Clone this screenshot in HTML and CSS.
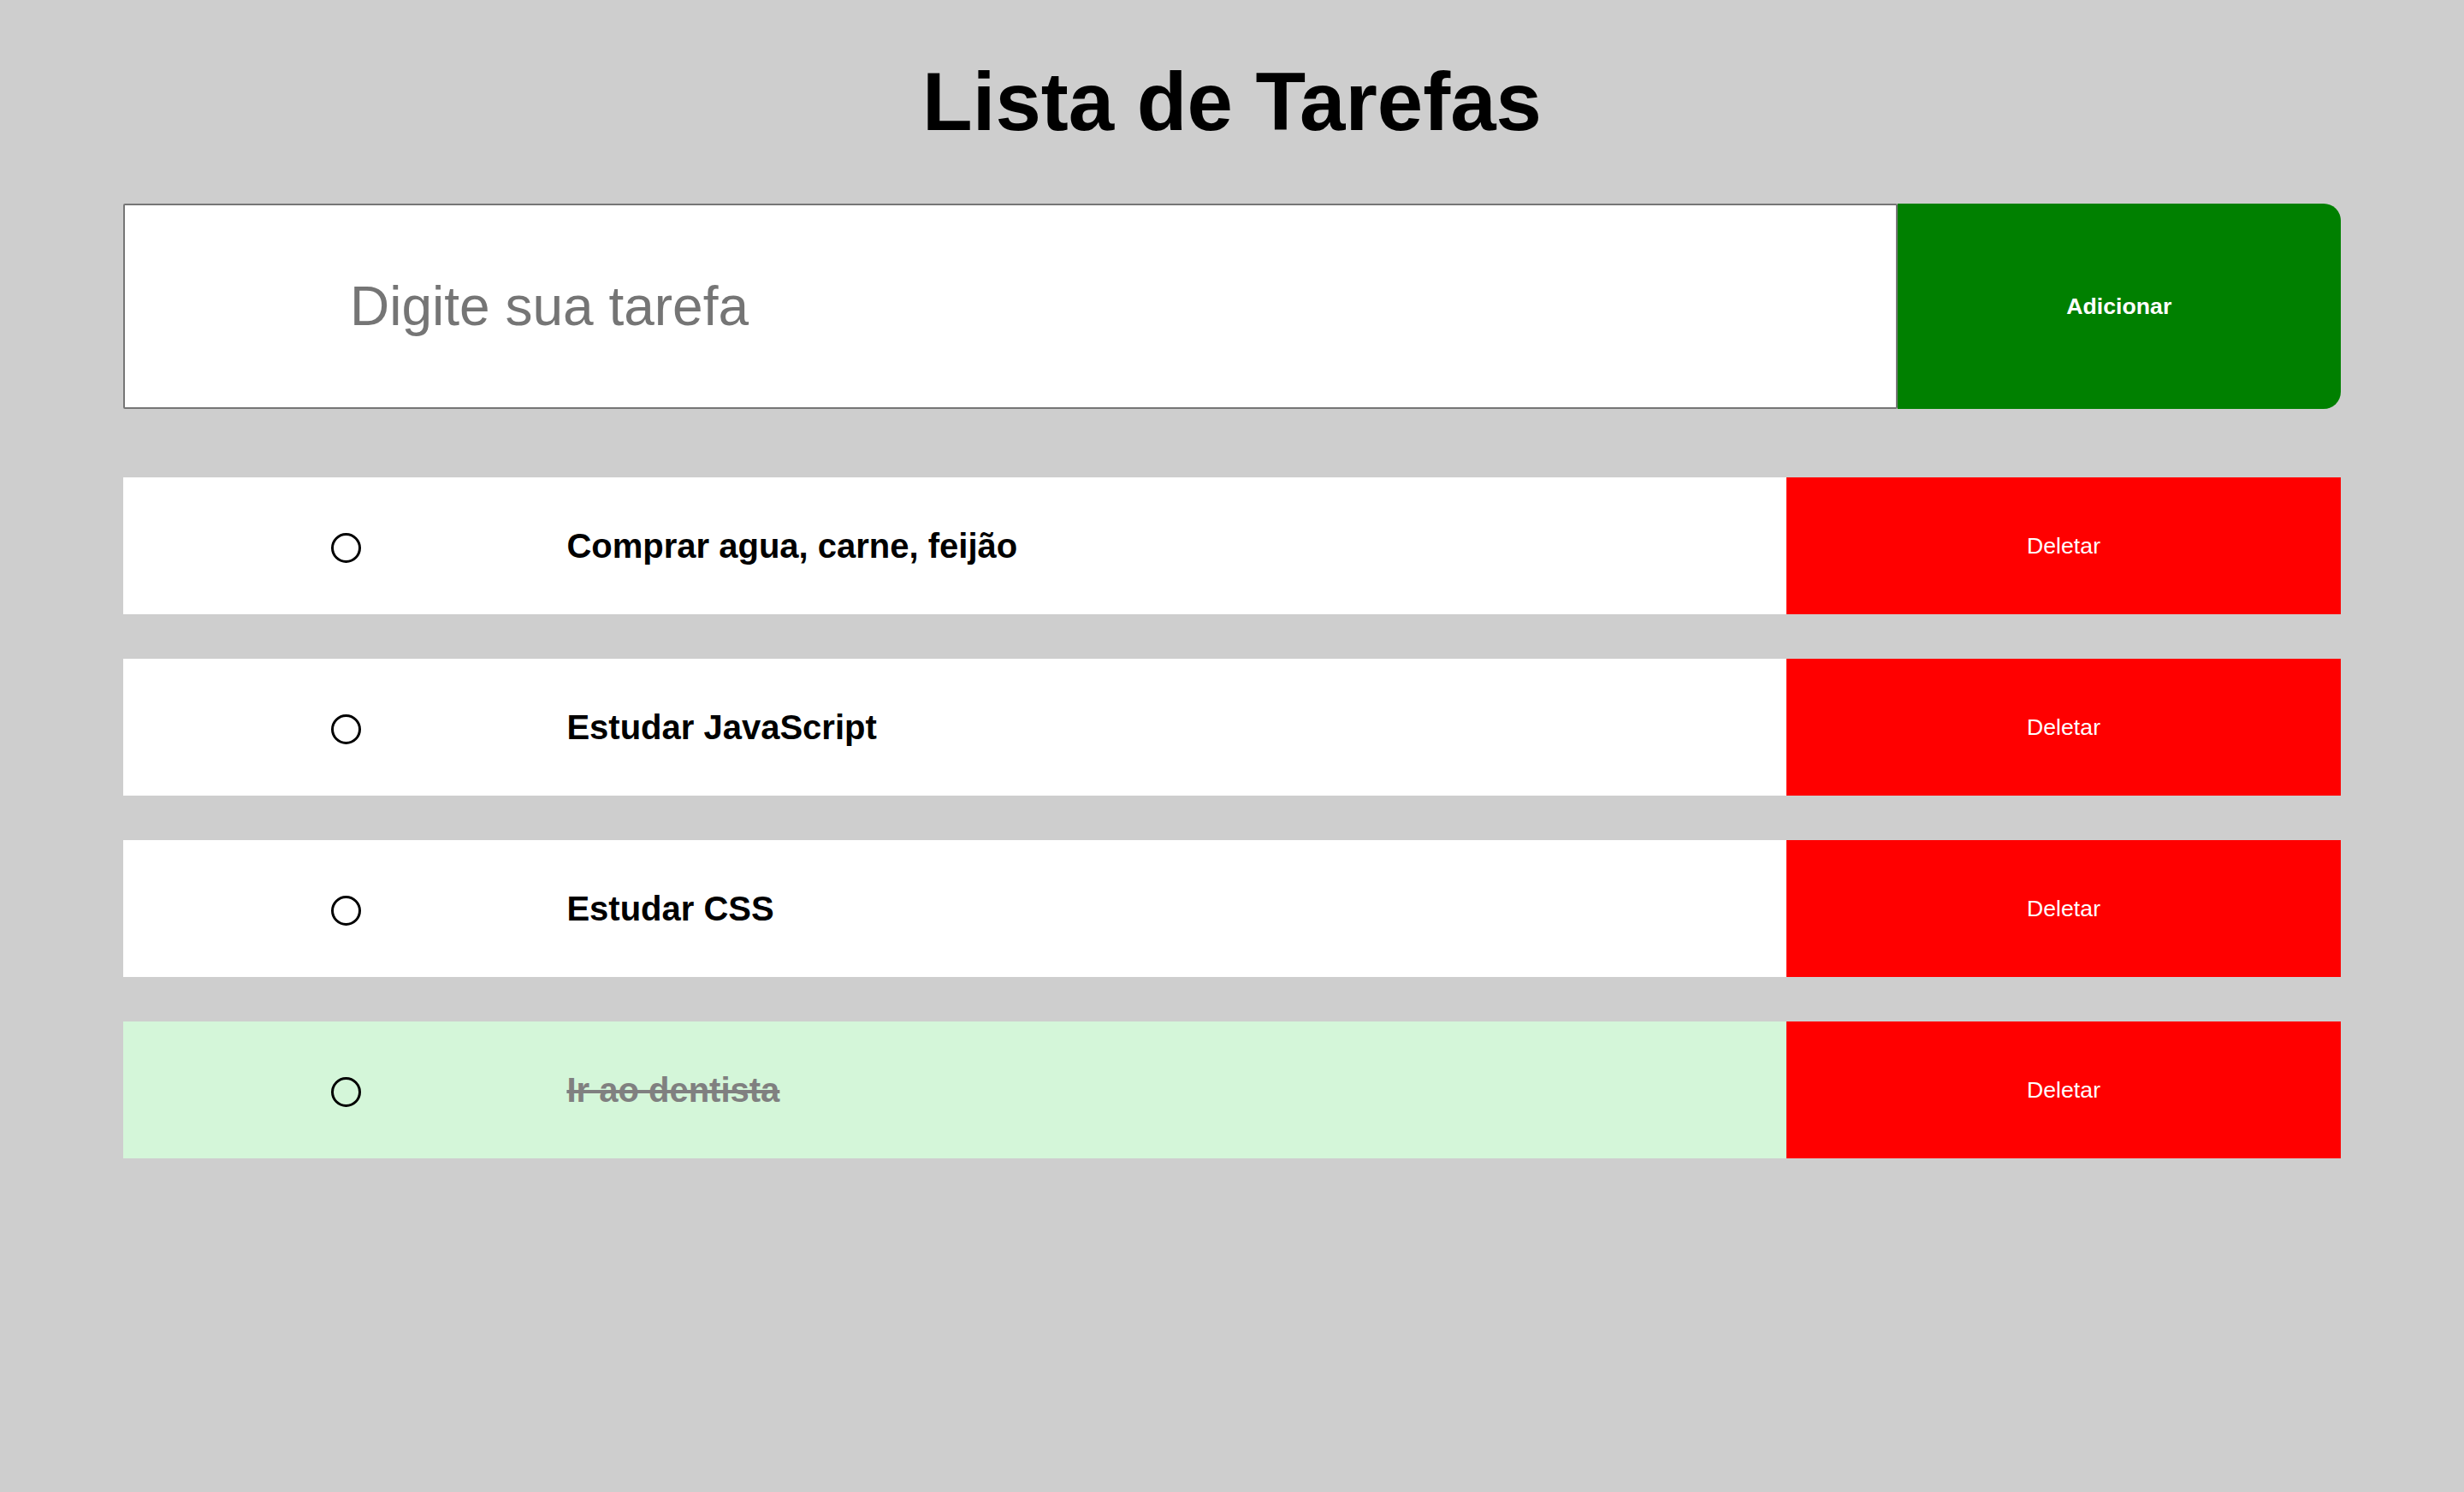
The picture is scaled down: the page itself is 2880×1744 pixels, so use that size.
FILE: index.html
```html
<!DOCTYPE html>
<html lang="pt-BR">
<head>
<meta charset="utf-8">
<title>Lista de Tarefas</title>
<link rel="stylesheet" href="styles.css">
</head>
<body>
<main class="app">
  <h1 class="title">Lista de Tarefas</h1>
  <form class="add-form">
    <input class="add-input" type="text" placeholder="Digite sua tarefa">
    <button class="add-btn" type="button">Adicionar</button>
  </form>
  <ul class="tasks">
    <li class="task">
      <div class="task-check"><span class="circle"></span></div>
      <span class="task-text">Comprar agua, carne, feijão</span>
      <button class="del-btn" type="button">Deletar</button>
    </li>
    <li class="task">
      <div class="task-check"><span class="circle"></span></div>
      <span class="task-text">Estudar JavaScript</span>
      <button class="del-btn" type="button">Deletar</button>
    </li>
    <li class="task">
      <div class="task-check"><span class="circle"></span></div>
      <span class="task-text">Estudar CSS</span>
      <button class="del-btn" type="button">Deletar</button>
    </li>
    <li class="task done">
      <div class="task-check"><span class="circle"></span></div>
      <span class="task-text">Ir ao dentista</span>
      <button class="del-btn" type="button">Deletar</button>
    </li>
  </ul>
</main>
</body>
</html>
```
FILE: styles.css
```css
html, body {
  margin: 0;
  padding: 0;
}
body {
  background: #cecece;
  font-family: "Liberation Sans", Arial, sans-serif;
  color: #000;
}
.app {
  width: 90%;
  margin: 0 auto;
}
.title {
  margin: 64px 0 0;
  font-size: 96px;
  line-height: 110px;
  font-weight: 700;
  text-align: center;
}
.add-form {
  display: flex;
  height: 240px;
  margin: 64px 0 0;
}
.add-input {
  box-sizing: border-box;
  width: 80%;
  height: 100%;
  margin: 0;
  border: 2px solid #767676;
  border-radius: 2px;
  padding: 0 0 0 263px;
  font-family: "Liberation Sans", Arial, sans-serif;
  font-size: 64px;
  background: #fff;
  outline: none;
}
.add-input::placeholder {
  color: #757575;
}
.add-btn {
  width: 20%;
  height: 100%;
  margin: 0;
  border: none;
  border-radius: 0 20px 20px 0;
  background: #008000;
  color: #fff;
  font-family: "Liberation Sans", Arial, sans-serif;
  font-size: 26.7px;
  font-weight: 700;
  padding-top: 2px;
}
.tasks {
  list-style: none;
  margin: 80px 0 0;
  padding: 0;
  display: flex;
  flex-direction: column;
  gap: 52px;
}
.task {
  display: flex;
  align-items: center;
  height: 160px;
  background: #fff;
}
.task.done {
  background: #d4f6d9;
}
.task-check {
  width: 20%;
  display: flex;
  justify-content: center;
  align-items: center;
}
.circle {
  box-sizing: border-box;
  width: 35px;
  height: 35px;
  margin: 4px 0 0 2px;
  border: 3.5px solid #000;
  border-radius: 50%;
}
.task-text {
  flex: 1;
  font-size: 40px;
  font-weight: 700;
}
.task.done .task-text {
  color: #808080;
  text-decoration: line-through;
}
.del-btn {
  width: 25%;
  height: 100%;
  margin: 0;
  border: none;
  background: #ff0000;
  color: #fff;
  font-family: "Liberation Sans", Arial, sans-serif;
  font-size: 26.7px;
}
```
